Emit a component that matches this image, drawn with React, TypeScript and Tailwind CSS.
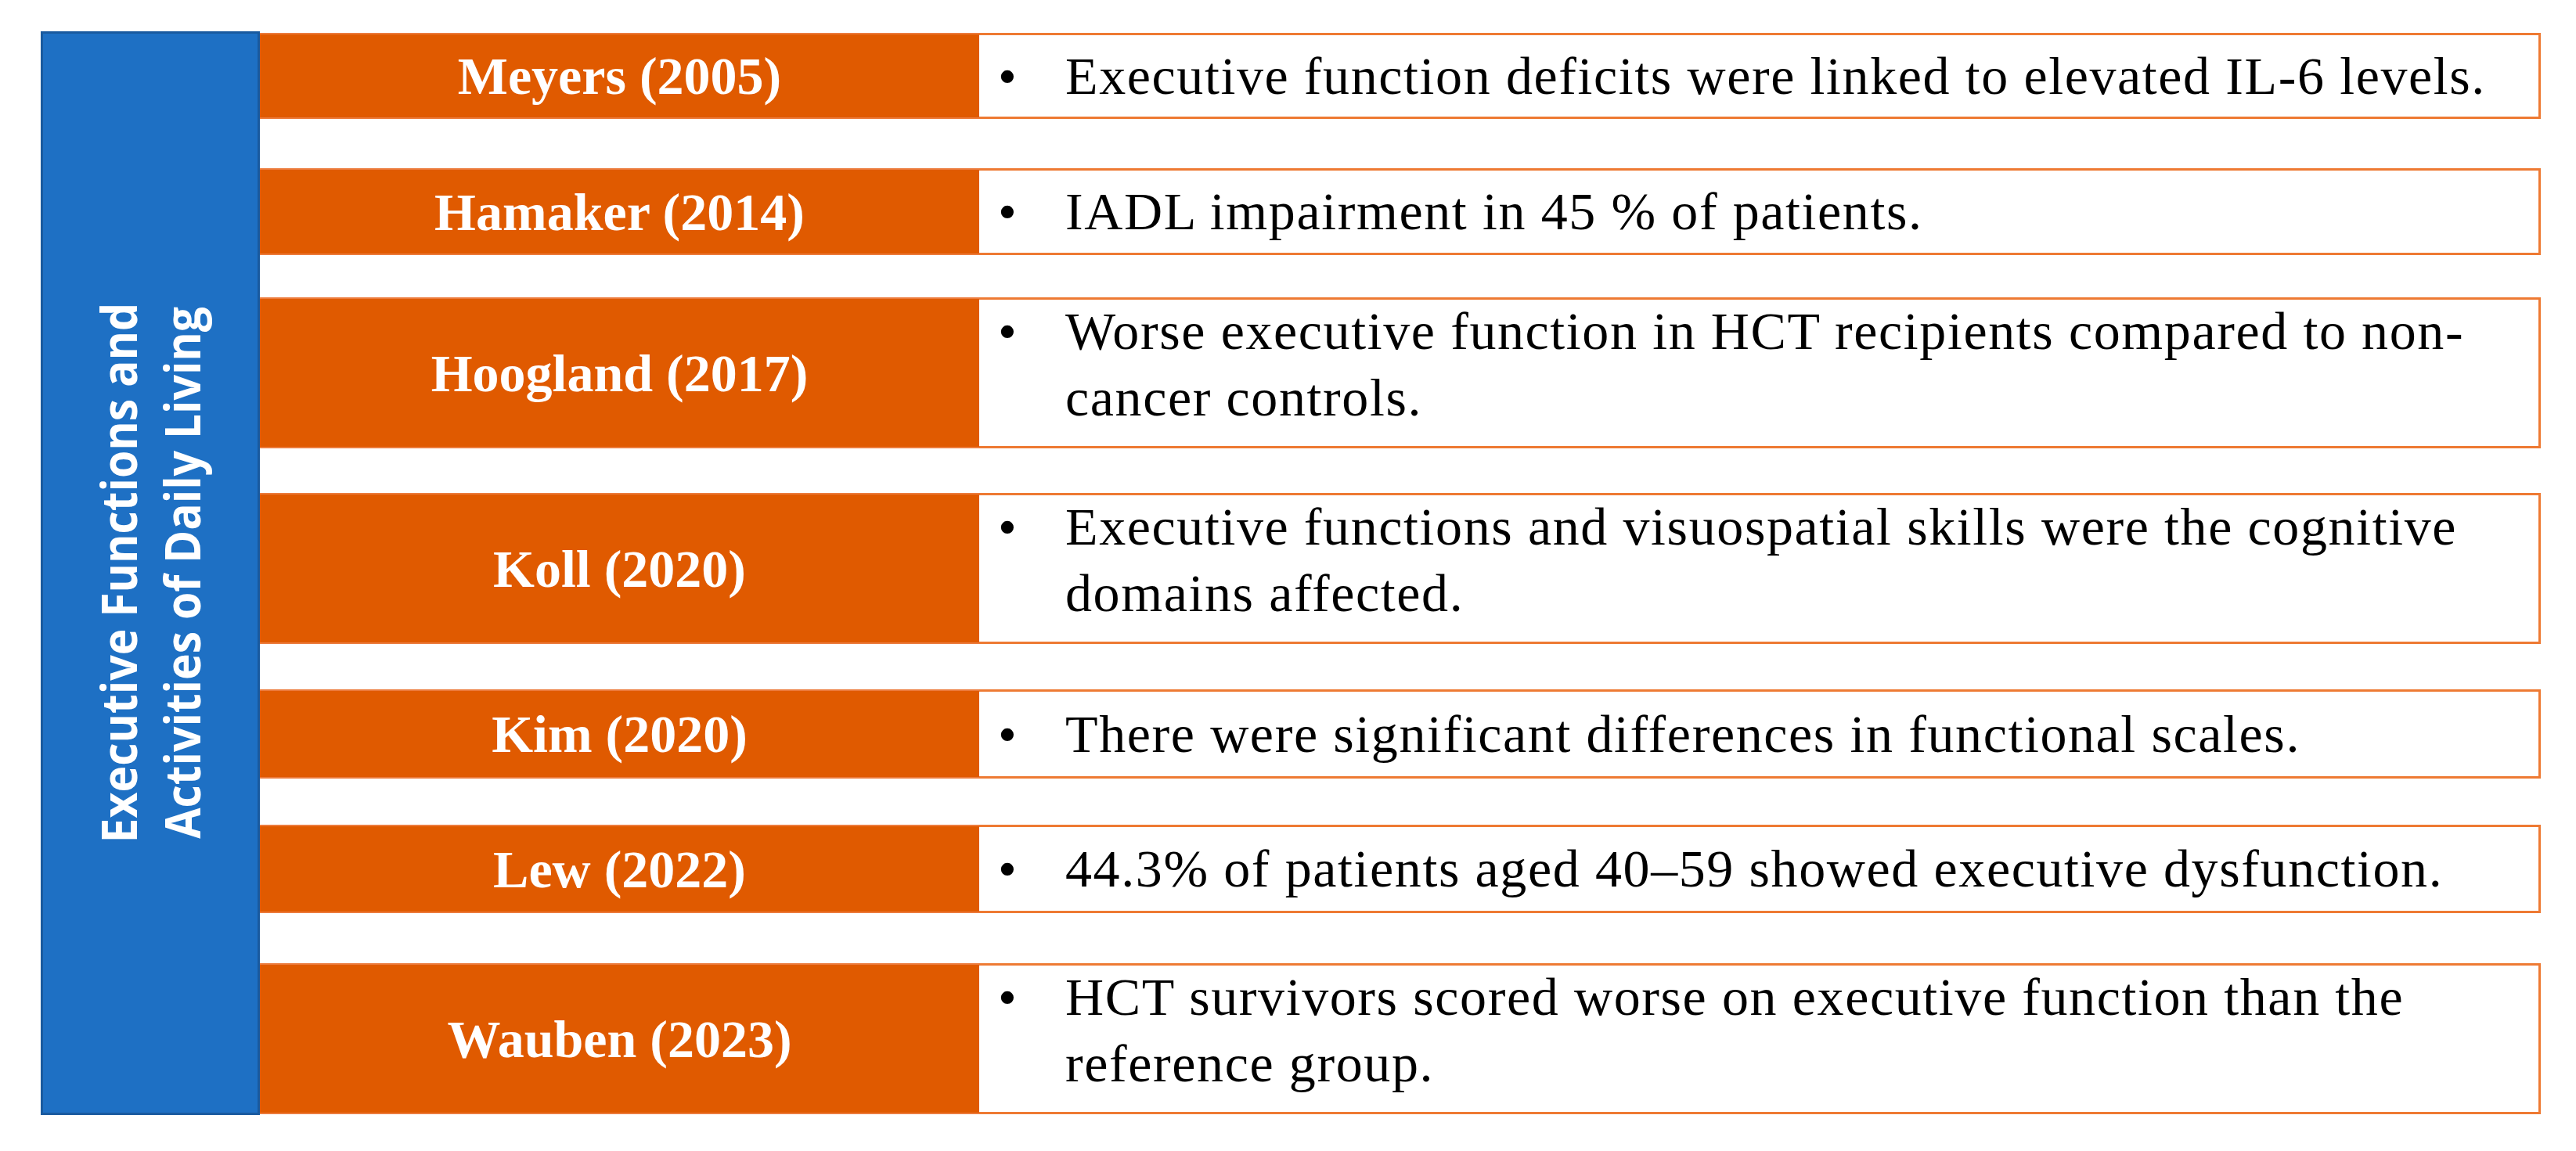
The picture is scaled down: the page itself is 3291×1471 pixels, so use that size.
const rows = [
  { label: 'Meyers (2005)', lines: ['Executive function deficits were linked to elevated IL-6 levels.'], box: 'mt-[2px] h-[110px]' },
  { label: 'Hamaker (2014)', lines: ['IADL impairment in 45 % of patients.'], box: 'mt-[63px] h-[111px]' },
  {
    label: 'Hoogland (2017)',
    lines: ['Worse executive function in HCT recipients compared to non-', 'cancer controls.'],
    box: 'mt-[54px] h-[193px]',
  },
  {
    label: 'Koll (2020)',
    lines: ['Executive functions and visuospatial skills were the cognitive', 'domains affected.'],
    box: 'mt-[57px] h-[193px]',
  },
  { label: 'Kim (2020)', lines: ['There were significant differences in functional scales.'], box: 'mt-[58px] h-[114px]' },
  { label: 'Lew (2022)', lines: ['44.3% of patients aged 40–59 showed executive dysfunction.'], box: 'mt-[59px] h-[113px]' },
  {
    label: 'Wauben (2023)',
    lines: ['HCT survivors scored worse on executive function than the', 'reference group.'],
    box: 'mt-[64px] h-[193px]',
  },
]

function StudyRow({ label, lines, box }: { label: string; lines: string[]; box: string }) {
  const multi = lines.length > 1
  return (
    <div className={`flex shrink-0 ${box}`}>
      <div className="w-[919px] shrink-0 bg-[#e05a00] border-y-2 border-[#ec7b3c] flex items-center justify-center">
        <span className="font-['Liberation_Serif',serif] font-bold text-[68px] text-white leading-none">{label}</span>
      </div>
      <div className="flex-1 bg-white border-[3px] border-l-0 border-[#ee7a33] flex items-center">
        <div
          className={`flex font-['Liberation_Serif',serif] text-[68px] tracking-[1.6px] leading-[85px] text-black ${
            multi ? 'pb-[22px]' : ''
          }`}
        >
          <span className="w-[110px] shrink-0 pl-[24px]">•</span>
          <div>
            {lines.map((l) => (
              <div key={l} className="whitespace-nowrap">
                {l}
              </div>
            ))}
          </div>
        </div>
      </div>
    </div>
  )
}

export default function App() {
  return (
    <div className="w-[3291px] h-[1471px] bg-white pt-[40px] pl-[52px] pr-[45px]">
      <div className="flex h-[1385px]">
        <div className="w-[280px] shrink-0 bg-[#1e70c4] border-[3px] border-[#195a9f] flex items-center justify-center">
          <p className="[writing-mode:vertical-rl] rotate-180 scale-y-[0.92] font-['Open_Sans',sans-serif] font-bold text-[62px] leading-[81px] text-white text-center">
            Executive Functions and
            <br />
            Activities of Daily Living
          </p>
        </div>
        <div className="flex-1 flex flex-col">
          {rows.map((r) => (
            <StudyRow key={r.label} {...r} />
          ))}
        </div>
      </div>
    </div>
  )
}
